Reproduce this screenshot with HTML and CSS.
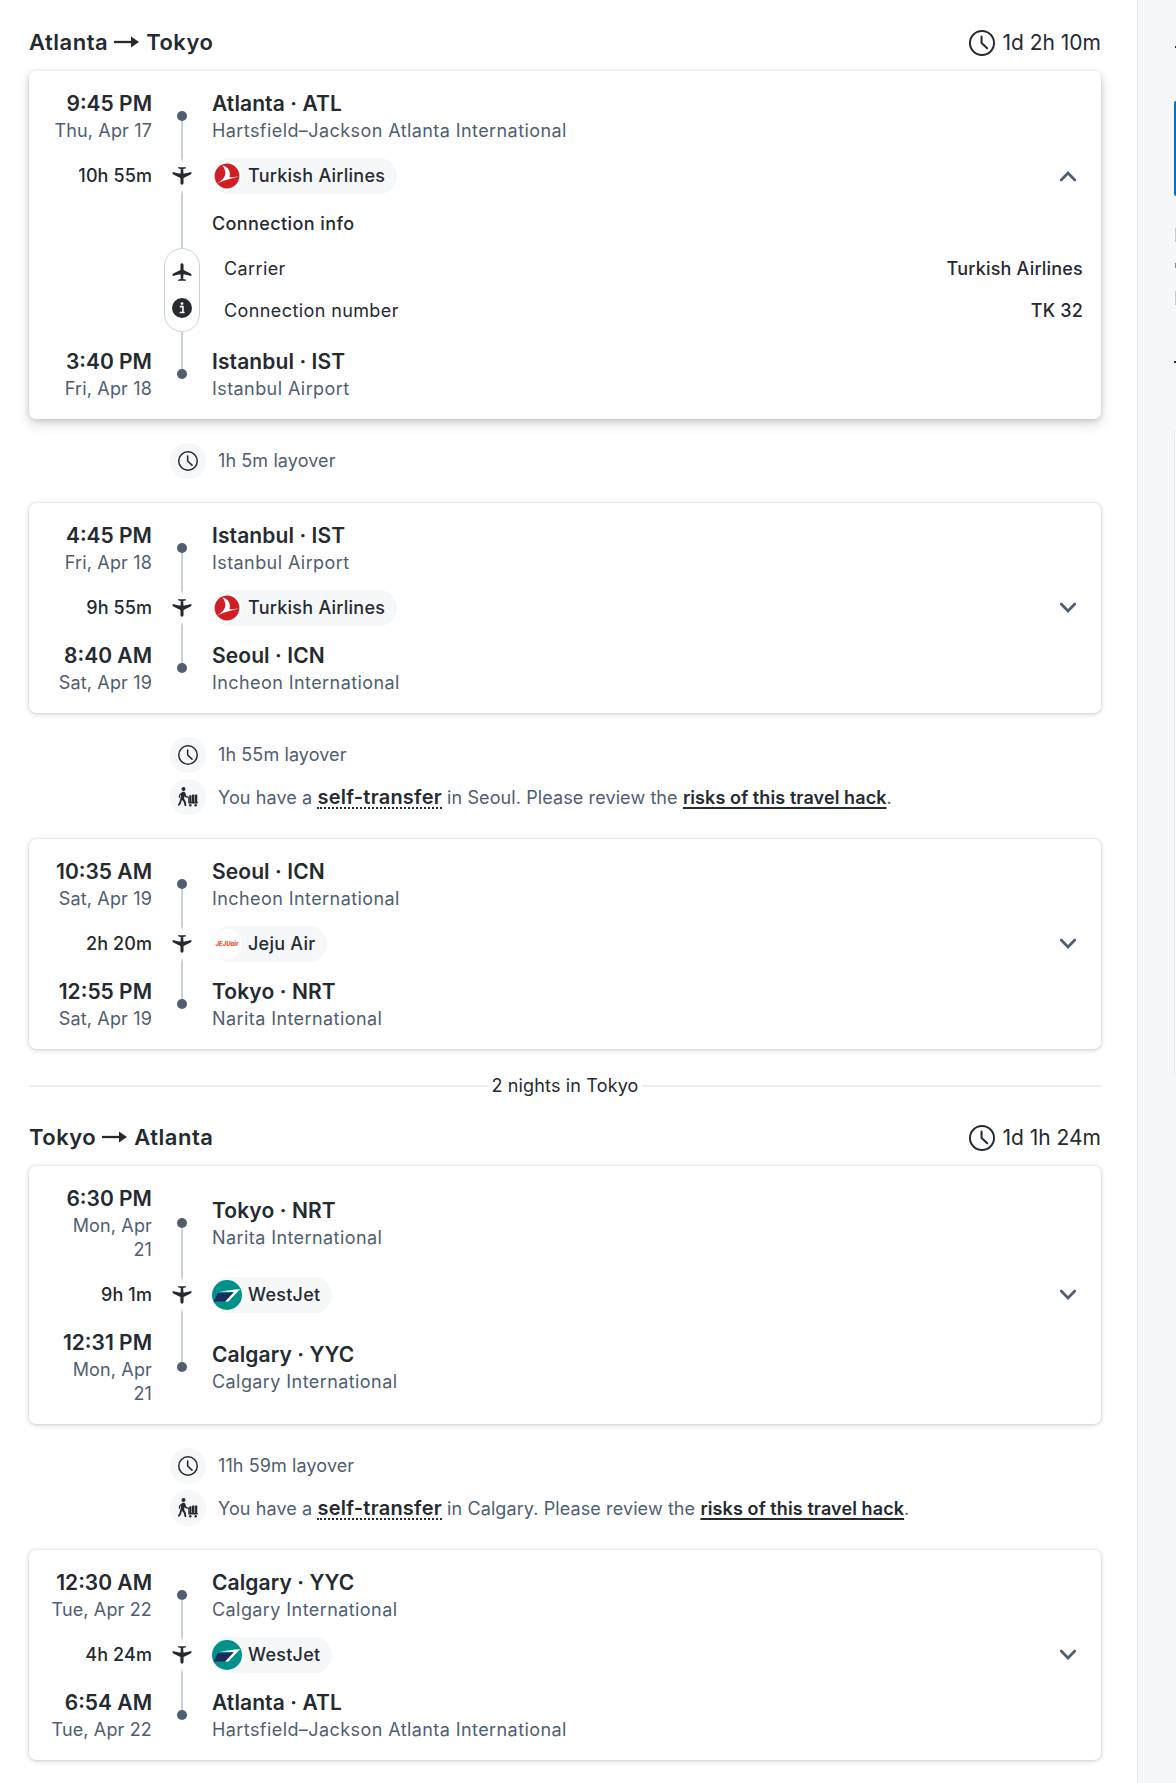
FILE: index.html
```
<!DOCTYPE html>
<html lang="en">
<head>
<meta charset="utf-8">
<title>Atlanta – Tokyo itinerary</title>
<link rel="stylesheet" href="styles.css">
</head>
<body>
<svg class="sprite" aria-hidden="true">
  <symbol id="clock" viewBox="0 0 24 24"><circle cx="12" cy="12" r="11.1" fill="none" stroke="currentColor" stroke-width="1.8"/><path d="M11.6 6v6l5.2 4.9" fill="none" stroke="currentColor" stroke-width="1.9" stroke-linecap="round" stroke-linejoin="round"/></symbol>
  <symbol id="plane" viewBox="0 0 24 24"><path fill="currentColor" d="M12 2.5c-1.200 0-1.700 1-1.700 2.300v4.900l-7.800 4c-.6.3-.8.7-.8 1.200v1.500l8.600-2 .5 5.200-3.200.9v1.100h8.800v-1.100l-3.200-.9.500-5.200 8.600 2v-1.500c0-.5-.2-.9-.8-1.200l-7.800-4V4.800c0-1.300-.5-2.300-1.700-2.300z"/></symbol>
  <symbol id="info" viewBox="0 0 24 24"><circle cx="12" cy="12" r="12" fill="currentColor"/><circle cx="12" cy="6.700" r="1.600" fill="#fff"/><path d="M9.400 10.300h3.700v7M9.200 17.400h5.900" fill="none" stroke="#fff" stroke-width="1.900"/></symbol>
  <symbol id="chevron" viewBox="0 0 18 12"><path d="M2.200 2l6.800 7 6.800-7" fill="none" stroke="currentColor" stroke-width="2.700" stroke-linecap="round"/></symbol>
  <symbol id="trolley" viewBox="0 0 24 24"><g fill="currentColor"><circle cx="6.600" cy="2.500" r="2.400"/><path d="M4.700 6.200c1.600-1.100 3.600-.6 4.100 1l1.300 3.600 3 .9v1.600l-4.200-1-1-1.600-.6 3.300 2 3.300.8 5.400H8l-1.100-4.700-2.200-2.600-1.200 4.400-2.400 2.900-1.500-1.200 2-2.800 1.600-6.100.5-3.300-1 .9-.5 2.800H.8l.5-3.600z"/><rect x="13.500" y="10" width="2.600" height="8"/><rect x="16.700" y="9" width="2.800" height="9" rx=".8"/><rect x="20.100" y="9" width="3" height="9" rx=".8"/><path d="M12.300 11.700h1.200v6h10.200v2.200H12.300z"/><circle cx="14.700" cy="22" r="1.500"/><circle cx="21.200" cy="22" r="1.500"/></g></symbol>
  <symbol id="arrow" viewBox="0 0 25 14"><path d="M0 7h18" stroke="currentColor" stroke-width="2.300"/><path d="M17 1.500L25 7l-8 5.500z" fill="currentColor"/></symbol>
  <symbol id="turkish" viewBox="0 0 30 30"><circle cx="15" cy="15" r="15" fill="#fff"/><circle cx="15" cy="15" r="12.400" fill="#d01e25"/><path fill="#fff" d="M10.200 4.300c5.500 1.400 9 6 7.300 12.200l9.600-.9c-6.500 1.300-14 3.500-22 6.900 8-4.500 11.200-10.700 5.100-18.200z"/></symbol>
  <symbol id="westjet" viewBox="0 0 30 30"><circle cx="15" cy="15" r="15" fill="#00928a"/><path fill="#fff" d="M7.600 11.500L28.200 8.900 16.500 21.400H13l9-9.400z"/><path fill="#1c2a5c" d="M5.600 13.200l15.700-.8-8.400 9H1.600z"/></symbol>
</svg>
<div class="page">
<main class="itinerary">
  <header class="trip">
    <h2 class="route">Atlanta<svg class="arrow"><use href="#arrow"/></svg>Tokyo</h2>
    <div class="duration"><svg class="clock-lg"><use href="#clock"/></svg>1d 2h 10m</div>
  </header>

  <section class="card card-open">
    <div class="row">
      <div class="when"><strong>9:45 PM</strong><span>Thu, Apr 17</span></div>
      <div class="rail rail-start"><i class="dot"></i></div>
      <div class="place"><strong>Atlanta · ATL</strong><span>Hartsfield–Jackson Atlanta International</span></div>
    </div>
    <div class="row flight">
      <div class="length">10h 55m</div>
      <div class="rail rail-mid"><svg class="plane down"><use href="#plane"/></svg></div>
      <div class="carrier"><span class="pill"><svg class="logo"><use href="#turkish"/></svg>Turkish Airlines</span><svg class="chevron up"><use href="#chevron"/></svg></div>
    </div>
    <div class="row details">
      <div></div>
      <div class="rail rail-info"><div class="capsule"><svg class="plane"><use href="#plane"/></svg><svg class="info"><use href="#info"/></svg></div></div>
      <div class="facts">
        <h3>Connection info</h3>
        <div class="fact"><span>Carrier</span><b>Turkish Airlines</b></div>
        <div class="fact"><span>Connection number</span><b>TK 32</b></div>
      </div>
    </div>
    <div class="row arrival">
      <div class="when"><strong>3:40 PM</strong><span>Fri, Apr 18</span></div>
      <div class="rail rail-end"><i class="dot"></i></div>
      <div class="place"><strong>Istanbul · IST</strong><span>Istanbul Airport</span></div>
    </div>
  </section>

  <div class="layover">
    <div class="note"><span class="badge"><svg class="clock"><use href="#clock"/></svg></span><p>1h 5m layover</p></div>
  </div>

  <section class="card">
    <div class="row">
      <div class="when"><strong>4:45 PM</strong><span>Fri, Apr 18</span></div>
      <div class="rail rail-start"><i class="dot"></i></div>
      <div class="place"><strong>Istanbul · IST</strong><span>Istanbul Airport</span></div>
    </div>
    <div class="row flight">
      <div class="length">9h 55m</div>
      <div class="rail rail-mid"><svg class="plane down"><use href="#plane"/></svg></div>
      <div class="carrier"><span class="pill"><svg class="logo"><use href="#turkish"/></svg>Turkish Airlines</span><svg class="chevron"><use href="#chevron"/></svg></div>
    </div>
    <div class="row arrival">
      <div class="when"><strong>8:40 AM</strong><span>Sat, Apr 19</span></div>
      <div class="rail rail-end"><i class="dot"></i></div>
      <div class="place"><strong>Seoul · ICN</strong><span>Incheon International</span></div>
    </div>
  </section>

  <div class="layover">
    <div class="note"><span class="badge"><svg class="clock"><use href="#clock"/></svg></span><p>1h 55m layover</p></div>
    <div class="note"><span class="badge"><svg class="trolley"><use href="#trolley"/></svg></span><p>You have a <span class="term">self-transfer</span> in Seoul. Please review the <a class="risk">risks of this travel hack</a>.</p></div>
  </div>

  <section class="card">
    <div class="row">
      <div class="when"><strong>10:35 AM</strong><span>Sat, Apr 19</span></div>
      <div class="rail rail-start"><i class="dot"></i></div>
      <div class="place"><strong>Seoul · ICN</strong><span>Incheon International</span></div>
    </div>
    <div class="row flight">
      <div class="length">2h 20m</div>
      <div class="rail rail-mid"><svg class="plane down"><use href="#plane"/></svg></div>
      <div class="carrier"><span class="pill"><span class="logo jeju">JEJUair</span>Jeju Air</span><svg class="chevron"><use href="#chevron"/></svg></div>
    </div>
    <div class="row arrival">
      <div class="when"><strong>12:55 PM</strong><span>Sat, Apr 19</span></div>
      <div class="rail rail-end"><i class="dot"></i></div>
      <div class="place"><strong>Tokyo · NRT</strong><span>Narita International</span></div>
    </div>
  </section>

  <div class="nights">2 nights in Tokyo</div>

  <header class="trip">
    <h2 class="route">Tokyo<svg class="arrow"><use href="#arrow"/></svg>Atlanta</h2>
    <div class="duration"><svg class="clock-lg"><use href="#clock"/></svg>1d 1h 24m</div>
  </header>

  <section class="card">
    <div class="row">
      <div class="when"><strong>6:30 PM</strong><span>Mon, Apr<br>21</span></div>
      <div class="rail rail-start"><i class="dot"></i></div>
      <div class="place"><strong>Tokyo · NRT</strong><span>Narita International</span></div>
    </div>
    <div class="row flight">
      <div class="length">9h 1m</div>
      <div class="rail rail-mid"><svg class="plane down"><use href="#plane"/></svg></div>
      <div class="carrier"><span class="pill"><svg class="logo"><use href="#westjet"/></svg>WestJet</span><svg class="chevron"><use href="#chevron"/></svg></div>
    </div>
    <div class="row arrival">
      <div class="when"><strong>12:31 PM</strong><span>Mon, Apr<br>21</span></div>
      <div class="rail rail-end"><i class="dot"></i></div>
      <div class="place"><strong>Calgary · YYC</strong><span>Calgary International</span></div>
    </div>
  </section>

  <div class="layover">
    <div class="note"><span class="badge"><svg class="clock"><use href="#clock"/></svg></span><p>11h 59m layover</p></div>
    <div class="note"><span class="badge"><svg class="trolley"><use href="#trolley"/></svg></span><p>You have a <span class="term">self-transfer</span> in Calgary. Please review the <a class="risk">risks of this travel hack</a>.</p></div>
  </div>

  <section class="card">
    <div class="row">
      <div class="when"><strong>12:30 AM</strong><span>Tue, Apr 22</span></div>
      <div class="rail rail-start"><i class="dot"></i></div>
      <div class="place"><strong>Calgary · YYC</strong><span>Calgary International</span></div>
    </div>
    <div class="row flight">
      <div class="length">4h 24m</div>
      <div class="rail rail-mid"><svg class="plane down"><use href="#plane"/></svg></div>
      <div class="carrier"><span class="pill"><svg class="logo"><use href="#westjet"/></svg>WestJet</span><svg class="chevron"><use href="#chevron"/></svg></div>
    </div>
    <div class="row arrival">
      <div class="when"><strong>6:54 AM</strong><span>Tue, Apr 22</span></div>
      <div class="rail rail-end"><i class="dot"></i></div>
      <div class="place"><strong>Atlanta · ATL</strong><span>Hartsfield–Jackson Atlanta International</span></div>
    </div>
  </section>
</main>
<aside class="side">
  <div class="side-title"></div>
  <div class="side-button"></div>
  <div class="side-lines"><i></i><i class="short"></i><i></i></div>
  <div class="side-link"></div>
  <div class="side-card"></div>
</aside>
</div>
</body>
</html>
```
FILE: styles.css
```
* { box-sizing: border-box; margin: 0; padding: 0; }

body {
  height: 1783px;
  overflow: hidden;
  background: #fff;
  color: #252a31;
  font: 400 18px/24px Inter, "Liberation Sans", sans-serif;
}

svg { display: block; flex: none; }
.sprite { position: absolute; width: 0; height: 0; }

.page { display: flex; height: 1783px; }
.itinerary { width: 1137px; flex: none; padding: 28px 36px 0 29px; }

/* Trip heading */
.trip { display: flex; justify-content: space-between; align-items: center; height: 28px; margin-bottom: 15px; }
.route { display: flex; align-items: center; font-size: 22px; font-weight: 600; line-height: 28px; letter-spacing: .5px; }
.arrow { width: 25px; height: 14px; margin: 0 7px 0 6px; }
.duration { display: flex; align-items: center; gap: 7px; font-size: 21px; padding-top: 2px; }
.clock-lg { width: 26px; height: 26px; }

/* Segment card */
.card {
  padding: 19px 18px 18px 19px;
  background: #fff;
  border-radius: 7px;
  box-shadow: 0 0 2px rgba(37, 42, 49, .16), 0 1px 5px rgba(37, 42, 49, .2);
}
.card-open { box-shadow: 0 1px 5px rgba(37, 42, 49, .18), 0 5px 12px rgba(37, 42, 49, .18); }

.row { display: grid; grid-template-columns: 104px 60px 1fr; min-height: 53px; }
.flight { height: 66px; }
.details { height: 138px; }

.when, .place { display: flex; flex-direction: column; justify-content: center; gap: 2px; white-space: nowrap; }
.when { text-align: right; }
.when strong, .place strong { font-size: 21px; font-weight: 600; line-height: 27px; }
.when span { color: #4f5e71; letter-spacing: .15px; }
.place strong { letter-spacing: .1px; }
.place span { color: #4f5e71; letter-spacing: .42px; }

.arrival .when, .arrival .place { gap: 1px; }
.arrival .when strong, .arrival .place strong { line-height: 29px; }

.length { align-self: center; text-align: right; font-weight: 550; letter-spacing: .1px; }

/* Timeline */
.rail { display: flex; flex-direction: column; align-items: center; }
.rail::before, .rail::after { content: ""; flex: 1; width: 2px; }
.rail-start::after, .rail-end::before { background: #c8d0dc; }
.rail-start::after { flex: 1 0 1px; }
.rail-mid::before { background: linear-gradient(#c8d0dc 75%, transparent); }
.rail-mid::after { background: linear-gradient(transparent, #c8d0dc 25%); }
.rail-info::before { flex: 0 0 39px; background: #c8d0dc; }
.rail-info::after { background: #c8d0dc; }
.dot { width: 10px; height: 10px; border-radius: 50%; background: #4f5e71; }
.plane { width: 22px; height: 22px; margin: 2px 0; }
.down { transform: rotate(180deg); }

.capsule {
  display: flex;
  flex-direction: column;
  align-items: center;
  gap: 13px;
  width: 36px;
  height: 84px;
  padding-top: 10px;
  border: 1px solid #c8d3df;
  border-radius: 18px;
}
.info { width: 20px; height: 20px; }

/* Carrier */
.carrier { display: flex; justify-content: space-between; align-items: center; padding-right: 6px; }
.pill {
  display: flex;
  align-items: center;
  gap: 6px;
  height: 36px;
  padding-right: 12px;
  border-radius: 18px;
  background: #f5f7f9;
  font-weight: 550;
  letter-spacing: .25px;
}
.logo { width: 30px; height: 30px; flex: none; }
.jeju {
  border-radius: 50%;
  background: #fff;
  color: #e8501e;
  font: italic 800 6px/30px Inter, sans-serif;
  letter-spacing: 0;
  text-align: center;
}
.chevron { width: 18px; height: 12px; color: #4f5e71; }
.up { transform: rotate(180deg); }

.facts { padding-top: 3px; }
.facts h3 { margin-bottom: 12px; font-size: 18px; font-weight: 550; letter-spacing: .4px; }
.fact { display: flex; justify-content: space-between; align-items: center; height: 42px; padding-left: 12px; letter-spacing: .4px; }
.fact b { font-weight: 550; letter-spacing: .2px; }

/* Layover */
.layover { display: flex; flex-direction: column; gap: 6px; padding: 24px 0 24px 141px; }
.note { display: flex; align-items: center; gap: 12px; height: 36px; color: #4f5e71; letter-spacing: .1px; white-space: nowrap; }
.badge { display: grid; place-items: center; width: 36px; height: 36px; border-radius: 50%; background: #f5f7f9; color: #252a31; }
.clock, .trolley { width: 20px; height: 20px; }
.term {
  display: inline-block;
  height: 24px;
  border-bottom: 2px dotted #252a31;
  color: #252a31;
  font-size: 20px;
  font-weight: 600;
  line-height: 24px;
  letter-spacing: .25px;
}
.risk { color: #252a31; font-weight: 600; text-decoration: underline; text-decoration-thickness: 2px; text-underline-offset: 3px; }

/* Stopover divider */
.nights { display: flex; align-items: center; gap: 3px; height: 24px; margin: 25px 0; letter-spacing: .15px; }
.nights::before, .nights::after { content: ""; flex: 1; height: 2px; background: #e8edf1; }

/* Sidebar */
.side { flex: 1; min-width: 0; overflow: hidden; padding-left: 36px; border-left: 1px solid #e5eaef; background: #f5f7f9; }
.side-title { height: 2px; margin: 46px 0 53px 1px; background: #252a31; }
.side-button { height: 95px; border-radius: 7px 0 0 7px; background: #0172cb; }
.side-lines { display: flex; flex-direction: column; height: 109px; padding-top: 32px; }
.side-lines i { width: 1px; height: 14px; margin-left: 1px; background: #c3cad3; }
.side-lines .short { height: 6px; margin: 21px 0 23px 1px; background: #7c8796; }
.side-link { height: 20px; margin-top: 38px; border-bottom: 2px solid #252a31; }
.side-card { height: 644px; margin-top: 68px; border: 1px solid #e5eaef; border-right: 0; border-radius: 7px 0 0 7px; background: #fff; }
```
